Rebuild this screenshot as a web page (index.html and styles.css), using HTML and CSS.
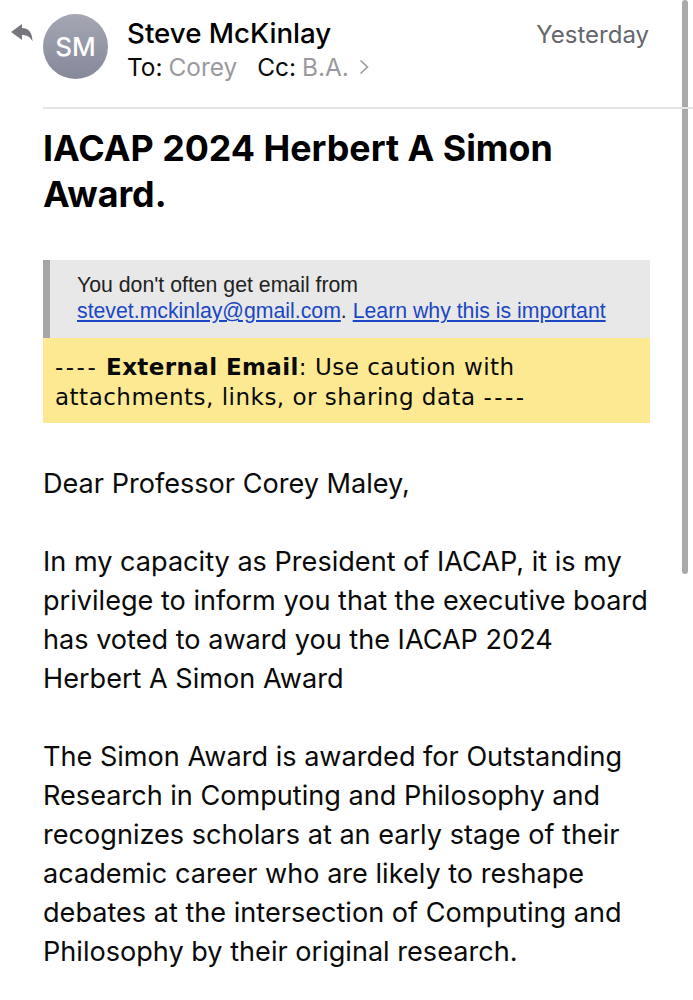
FILE: index.html
```html
<!DOCTYPE html>
<html lang="en">
<head>
<meta charset="utf-8">
<title>IACAP 2024 Herbert A Simon Award.</title>
<link rel="stylesheet" href="styles.css">
</head>
<body>
<div class="scrollbar"></div>
<main class="mail">
  <header class="head">
    <svg class="reply" viewBox="0 0 22 20" aria-hidden="true"><path d="M0 9 L11 1 V5 C17 5 21.5 9 21.5 18.5 C19.5 14 16 12 11 12 V17 Z" fill="#77767c"/></svg>
    <div class="avatar">SM</div>
    <div class="who">
      <div class="name">Steve McKinlay</div>
      <div class="rcpt"><span>To:</span> <span class="muted">Corey</span><span class="cc">Cc:</span> <span class="muted">B.A.</span>
        <svg class="chev" viewBox="0 0 10 16" aria-hidden="true"><path d="M1.5 1.5 L8.5 8 L1.5 14.5" fill="none" stroke="#9a9a9e" stroke-width="1.6"/></svg>
      </div>
    </div>
    <div class="when">Yesterday</div>
  </header>
  <h1 class="subject">IACAP 2024 Herbert A Simon Award.</h1>
  <section class="notice">You don't often get email from<br><a href="#">stevet.mckinlay@gmail.com</a>. <a href="#">Learn why this is important</a></section>
  <section class="external"><span class="dash">----</span> <b>External Email</b>: Use caution with<br>attachments, links, or sharing data <span class="dash">----</span></section>
  <div class="body">
    <p>Dear Professor Corey Maley,</p>
    <p>In my capacity as President of IACAP, it is my<br>privilege to inform you that the executive board<br>has voted to award you the IACAP 2024<br>Herbert A Simon Award</p>
    <p>The Simon Award is awarded for Outstanding<br>Research in Computing and Philosophy and<br>recognizes scholars at an early stage of their<br>academic career who are likely to reshape<br>debates at the intersection of Computing and<br>Philosophy by their original research.</p>
  </div>
</main>
</body>
</html>
```
FILE: styles.css
```css
html, body { margin: 0; padding: 0; background: #fff; }
body { width: 693px; height: 1000px; overflow: hidden; position: relative; font-family: Inter, "Liberation Sans", sans-serif; color: #0a0a0a; }
.scrollbar { position: absolute; left: 682px; top: 0; width: 5.5px; height: 574px; background: #a9a9a9; border-radius: 3px; }
.mail { padding: 0 43px; width: 607px; }
.head { position: relative; height: 109px; margin-right: -43px; padding-right: 44px; border-bottom: 2px solid #e4e4e4; box-sizing: border-box; display: flex; align-items: flex-start; }
.reply { position: absolute; left: -32px; top: 23px; width: 22px; height: 20px; }
.avatar { width: 65px; height: 65px; margin-top: 14px; border-radius: 50%; background: linear-gradient(#a5a7b3, #85889a); color: #fff; font-size: 26px; font-weight: 500; line-height: 65px; text-align: center; flex: none; }
.who { margin-left: 19px; margin-top: 16px; flex: 1; }
.name { font-size: 27.7px; font-weight: 500; line-height: 34px; color: #000; }
.rcpt { font-size: 24.4px; line-height: 34px; display: flex; gap: 6px; align-items: center; }
.muted { color: #9a9a9e; }
.cc { margin-left: 14px; }
.chev { width: 10px; height: 16px; margin-left: 4px; }
.when { font-size: 24px; color: #66666c; margin-top: 18px; line-height: 34px; }
.subject { margin: 16px 0 0; font-size: 35.8px; line-height: 46px; font-weight: 700; width: 560px; color: #000; }
.notice { margin-top: 43px; background: #e8e8e8; border-left: 7px solid #a6a6a6; padding: 12px 0 13px 27px; height: 78px; box-sizing: border-box; font-family: "Liberation Sans", sans-serif; font-size: 21.28px; line-height: 26px; color: #222; white-space: nowrap; }
.notice a { color: #1a47c4; }
.external { background: #fde992; padding: 14px 12px 11px; height: 85px; box-sizing: border-box; font-family: "DejaVu Sans", sans-serif; font-size: 23px; line-height: 30px; letter-spacing: 0.5px; color: #0a0a0a; white-space: nowrap; }
.external b { letter-spacing: 0.4px; }
.dash { letter-spacing: 2.5px; }
.body { margin-top: 41px; font-size: 27.1px; line-height: 39px; }
.body p { margin: 0 0 39px; white-space: nowrap; }
```
